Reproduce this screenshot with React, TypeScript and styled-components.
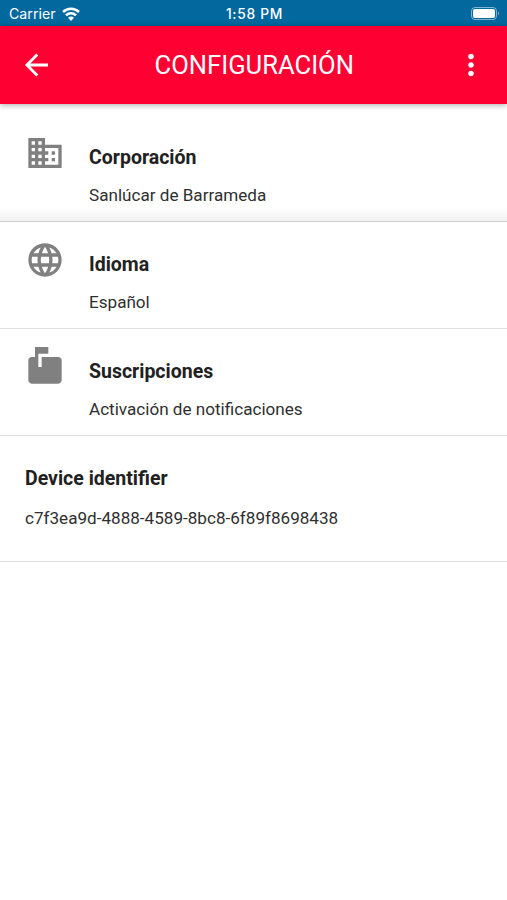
import React from "react";
import styled, { createGlobalStyle } from "styled-components";
import { MdMoreVert, MdDomain, MdLanguage, MdMarkunreadMailbox } from "react-icons/md";

const GlobalStyle = createGlobalStyle`
  body { margin: 0; background: #fff; font-family: Roboto, sans-serif; color: #212121; }
  * { box-sizing: border-box; }
`;
const Screen = styled.main`
  min-height: 100vh;
  display: flex;
  flex-direction: column;
`;
const StatusBar = styled.div`
  height: 25.5px;
  padding: 2px 7px 0 9px;
  display: grid;
  grid-template-columns: 1fr auto 1fr;
  align-items: center;
  background: #02689d;
  color: #fff;
  font: 14.2px/24px Inter, sans-serif;
`;
const Carrier = styled.div`
  display: flex;
  align-items: center;
  gap: 6px;
`;
const Clock = styled.span`
  font-size: 13.8px;
  font-weight: 500;
  letter-spacing: 0.7px;
`;
const BatterySlot = styled.div`
  display: flex;
  justify-content: flex-end;
`;
const Toolbar = styled.header`
  height: 78px;
  padding: 0 18.5px 0 20px;
  display: flex;
  align-items: center;
  justify-content: space-between;
  background: #ff0033;
  color: #fff;
  box-shadow: 0 1px 6px rgba(0, 0, 0, 0.35);
  z-index: 1;
`;
const ToolButton = styled.button`
  width: 34px;
  display: flex;
  padding: 0;
  border: 0;
  background: none;
  color: inherit;
  font-size: 34px;
`;
const Title = styled.h1`
  margin: 0;
  font-size: 25.6px;
  font-weight: 400;
  line-height: 32px;
`;
const Row = styled.section<{ $height: number; $first?: boolean }>`
  height: ${(p) => p.$height}px;
  padding: ${(p) => (p.$first ? 11 : 0)}px 0 0 25px;
  display: flex;
  gap: 24px;
  border-bottom: 1px solid ${(p) => (p.$first ? "#cecece" : "#dfdfdf")};
  background: ${(p) =>
    p.$first ? "linear-gradient(to top, #f1f1f1, #fff 14px)" : "#fff"};
`;
const RowIcon = styled.div`
  width: 40px;
  padding-top: 18px;
  color: #808080;
  font-size: 40px;
  line-height: 0;
`;
const RowText = styled.div`
  padding-top: 31px;
`;
const RowTitle = styled.h2`
  margin: 0;
  font-size: 19.5px;
  font-weight: 700;
  line-height: 24px;
`;
const RowDetail = styled.p<{ $spaced: boolean }>`
  margin: ${(p) => (p.$spaced ? 15 : 13)}px 0 0;
  font-size: 17.1px;
  line-height: 24px;
  color: #303030;
`;

const rows = [
  { title: "Corporación", detail: "Sanlúcar de Barrameda", Icon: MdDomain, height: 118, first: true },
  { title: "Idioma", detail: "Español", Icon: MdLanguage, height: 107 },
  { title: "Suscripciones", detail: "Activación de notificaciones", Icon: MdMarkunreadMailbox, height: 107 },
  { title: "Device identifier", detail: "c7f3ea9d-4888-4589-8bc8-6f89f8698438", height: 126 },
];

export default function App() {
  return (
    <Screen>
      <GlobalStyle />
      <StatusBar>
        <Carrier>
          Carrier
          <svg width="18" height="14" viewBox="0 0 18 14" fill="none" stroke="#fff" strokeWidth="2.5">
            <path d="M1 5a11.3 11.3 0 0 1 16 0M4 8.4a7 7 0 0 1 10 0" />
            <path d="M6 10.8a4.2 4.2 0 0 1 6 0L9 14Z" fill="#fff" stroke="none" />
          </svg>
        </Carrier>
        <Clock>1:58 PM</Clock>
        <BatterySlot>
          <svg width="29" height="14" viewBox="0 0 29 14">
            <rect x=".5" y=".5" width="25" height="12" rx="3.5" fill="none" stroke="#fff" strokeOpacity=".5" />
            <rect x="2" y="2" width="22" height="9" rx="2" fill="#fff" />
            <path d="M27 4.5q2 2 0 4z" fill="#fff" fillOpacity=".5" />
          </svg>
        </BatterySlot>
      </StatusBar>
      <Toolbar>
        <ToolButton aria-label="Volver">
          <svg width="34" height="34" viewBox="0 0 34 34" fill="none" stroke="#fff" strokeWidth="2.8">
            <path d="M28 17H7.5M17.3 6.6 6.9 17l10.4 10.4" />
          </svg>
        </ToolButton>
        <Title>CONFIGURACIÓN</Title>
        <ToolButton aria-label="Más opciones"><MdMoreVert /></ToolButton>
      </Toolbar>
      {rows.map(({ title, detail, Icon, height, first }) => (
        <Row key={title} $height={height} $first={first}>
          {Icon && <RowIcon><Icon /></RowIcon>}
          <RowText>
            <RowTitle>{title}</RowTitle>
            <RowDetail $spaced={!Icon}>{detail}</RowDetail>
          </RowText>
        </Row>
      ))}
    </Screen>
  );
}
